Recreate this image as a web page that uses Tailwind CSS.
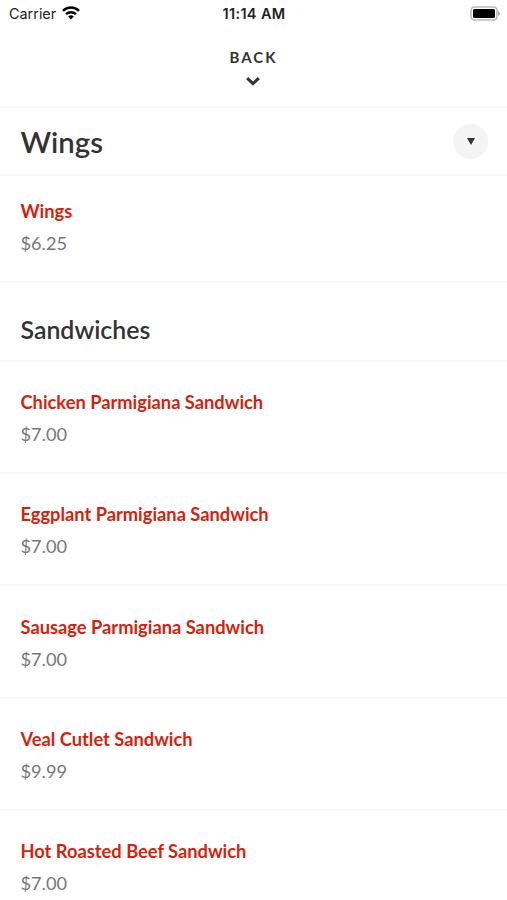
<!DOCTYPE html>
<html lang="en">
<head>
    <meta charset="UTF-8">
    <meta name="viewport" content="width=device-width, initial-scale=1.0">
    <title>Menu</title>
    <script src="https://cdn.jsdelivr.net/npm/@tailwindcss/browser@4"></script>
</head>
<body class="bg-white font-['Lato',sans-serif] antialiased h-[900px] overflow-hidden">
    <!-- Status Bar -->
    <div class="h-7 grid grid-cols-3 items-center pl-[9px] pr-[7px] font-['Inter',sans-serif] text-[#222]">
        <div class="flex items-center gap-1.5">
            <span class="text-[14.4px]">Carrier</span>
            <svg class="w-[18px] h-[14px] -mt-px" viewBox="0 0 18 14" fill="none" stroke="#000" stroke-width="2.5">
                <path d="M1 4.8a11.4 11.4 0 0 1 16 0"/>
                <path d="M4 8.2a7.2 7.2 0 0 1 10 0"/>
                <path d="M9 13.5L6.2 10.6a4 4 0 0 1 5.6 0z" fill="#000" stroke="none"/>
            </svg>
        </div>
        <span class="text-center text-[14.5px] tracking-[0.35px] pr-px font-semibold whitespace-nowrap">11:14 AM</span>
        <svg class="justify-self-end w-[30px] h-[15px] -mt-px" viewBox="0 0 30 15">
            <rect x="1" y="1" width="26" height="13" rx="3.5" fill="#fff" stroke="#bbb" stroke-width="1.6"/>
            <rect x="3" y="3" width="22" height="9" rx="1.5" fill="#000"/>
            <path d="M28 5q2 1 2 2.5t-2 2.5z" fill="#aaa"/>
        </svg>
    </div>

    <!-- Back Button -->
    <button class="w-full h-[80px] pt-[19px] flex flex-col items-center border-b-2 border-[#f8f8f8] text-[#333]">
        <span class="text-[15px] leading-5 font-bold tracking-[1.95px]">BACK</span>
        <svg class="mt-[9px] mr-px w-[14px] h-[10px]" viewBox="0 0 14 10" fill="none" stroke="#333" stroke-width="3">
            <path d="M1.2 2.1L7 7.6l5.8-5.5"/>
        </svg>
    </button>

    <!-- Current Category -->
    <div class="h-[68px] pl-[20.5px] pr-[19px] flex items-center justify-between border-b-2 border-[#f9f9f9]">
        <h1 class="pt-[3px] text-[29.4px] font-semibold text-[#333]">Wings</h1>
        <button class="w-[35px] h-[35px] rounded-full bg-[#f4f4f4] flex items-center justify-center">
            <svg class="w-2 h-[7px]" viewBox="0 0 8 7" fill="#333"><path d="M0 0h8L4 7z"/></svg>
        </button>
    </div>

    <div class="h-[107px] pt-[19px] pl-[20.5px] border-b-2 border-[#f8f8f8] text-[18.2px] leading-8">
        <h3 class="text-[18.3px] font-bold text-[#d61f0c]">Wings</h3>
        <p class="text-[#777]">$6.25</p>
    </div>

    <!-- Sandwiches -->
    <h2 class="h-[78.5px] pt-[28px] pl-[20.5px] border-b-2 border-[#f8f8f8] text-[24.9px] leading-9 font-semibold text-[#333]">Sandwiches</h2>
    <div class="text-[18.2px] leading-8 text-[#777]">
        <div class="h-[112.4px] pt-[24.3px] pl-[20.5px] border-b-2 border-[#f8f8f8]">
            <h3 class="text-[18.3px] font-bold text-[#d61f0c]">Chicken Parmigiana Sandwich</h3>
            <p>$7.00</p>
        </div>
        <div class="h-[112.4px] pt-[24.3px] pl-[20.5px] border-b-2 border-[#f8f8f8]">
            <h3 class="text-[18.3px] font-bold text-[#d61f0c]">Eggplant Parmigiana Sandwich</h3>
            <p>$7.00</p>
        </div>
        <div class="h-[112.4px] pt-[24.3px] pl-[20.5px] border-b-2 border-[#f8f8f8]">
            <h3 class="text-[18.3px] font-bold text-[#d61f0c]">Sausage Parmigiana Sandwich</h3>
            <p>$7.00</p>
        </div>
        <div class="h-[112.4px] pt-[24.3px] pl-[20.5px] border-b-2 border-[#f8f8f8]">
            <h3 class="text-[18.3px] font-bold text-[#d61f0c]">Veal Cutlet Sandwich</h3>
            <p>$9.99</p>
        </div>
        <div class="h-[112.4px] pt-[24.3px] pl-[20.5px]">
            <h3 class="text-[18.3px] font-bold text-[#d61f0c]">Hot Roasted Beef Sandwich</h3>
            <p>$7.00</p>
        </div>
    </div>
</body>
</html>
